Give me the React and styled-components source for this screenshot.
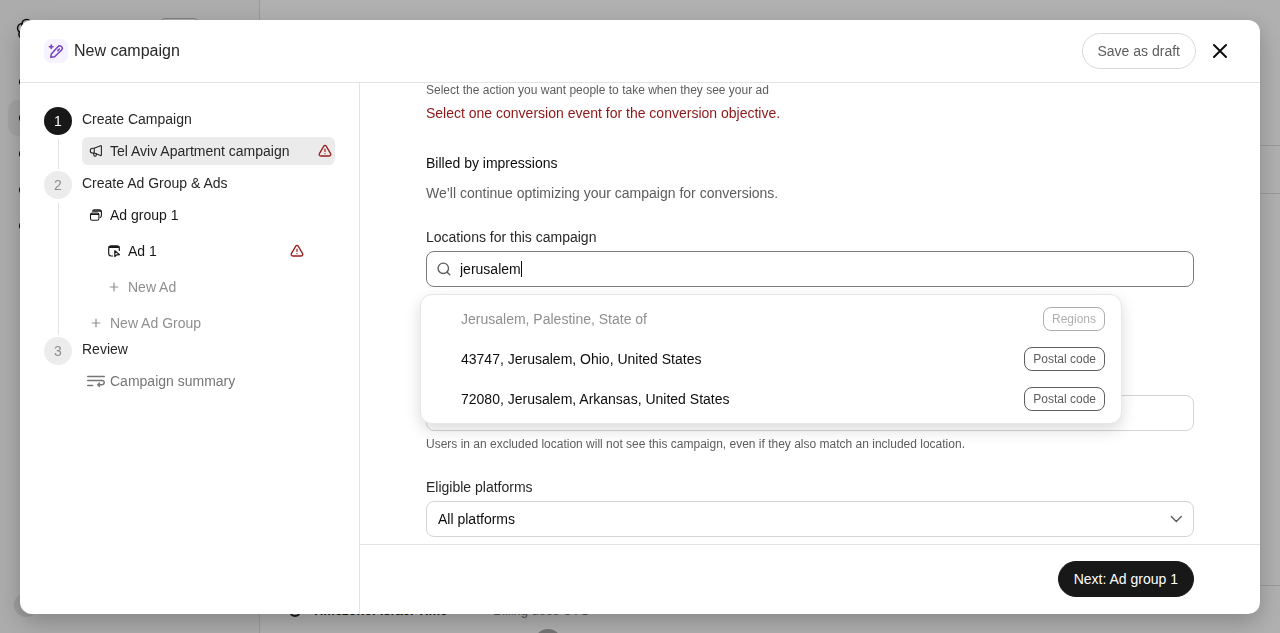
import React, { useState } from 'react';
import styled, { createGlobalStyle } from 'styled-components';

const GlobalStyle = createGlobalStyle`
	* {
		box-sizing: border-box;
	}

	body {
		margin: 0;
		color: #0d0d0d;
		font-family: "Liberation Sans", Arial, sans-serif;
		font-size: 14px;
		line-height: 20px;
	}

	button,
	input,
	select {
		color: inherit;
		font: inherit;
	}
`;

/* page behind the dialog */

const Shell = styled.div`
	display: grid;
	grid-template-columns: 260px 1fr;
	height: 100vh;
	overflow: hidden;
`;

const Nav = styled.nav`
	display: flex;
	flex-direction: column;
	justify-content: space-between;
	padding: 16px 8px;
	background: #fafafa;
	border-right: 1px solid #e0e0e0;
`;

const NavTop = styled.div`
	display: flex;
	justify-content: space-between;
	padding: 2px 53px 0 8px;
	margin-bottom: 22px;
`;

const NavTag = styled.span`
	width: 37px;
	height: 20px;
	border: 1px solid #bbb;
	border-radius: 4px;
`;

const NavItem = styled.a`
	display: flex;
	align-items: center;
	height: 36px;
	padding-left: 10px;
	border-radius: 10px;
	background: ${(props) => (props.$active ? '#ececec' : 'transparent')};
`;

const Avatar = styled.span`
	width: 24px;
	height: 24px;
	margin-left: 6px;
	border-radius: 50%;
	background: #e4e4e4;
`;

const Page = styled.main`
	display: flex;
	flex-direction: column;
	background: #fff;
`;

const PageBand = styled.div`
	flex: ${(props) => props.$size};
	border-bottom: 1px solid #e0e0e0;
`;

const PageFooter = styled.div`
	flex: 0 0 47px;
	height: 47px;
	padding: 15px 28px 0;
	overflow: hidden;
`;

const FooterNotes = styled.div`
	display: flex;
	gap: 46px;
`;

const FooterNote = styled.span`
	display: flex;
	align-items: center;
	gap: 10px;
	color: ${(props) => (props.$strong ? '#222' : '#777')};
	font-size: 13px;
	font-weight: ${(props) => (props.$strong ? 600 : 400)};
`;

const Bubble = styled.div`
	width: 28px;
	height: 28px;
	margin: 8px 0 0 246px;
	border-radius: 50%;
	background: #aaa;
`;

/* dialog */

const Overlay = styled.div`
	position: fixed;
	inset: 0;
	display: flex;
	padding: 20px 20px 19px;
	background: rgba(0, 0, 0, 0.31);
`;

const Dialog = styled.section`
	display: flex;
	flex: 1;
	flex-direction: column;
	overflow: hidden;
	border-radius: 12px;
	background: #fff;
	box-shadow: 0 8px 24px rgba(0, 0, 0, 0.24);
`;

const Header = styled.header`
	display: flex;
	align-items: center;
	height: 63px;
	padding: 0 24px;
	border-bottom: 1px solid #e3e3e3;
`;

const HeaderIcon = styled.span`
	display: grid;
	place-items: center;
	width: 24px;
	height: 24px;
	border-radius: 8px;
	background: #f7f2ff;
	color: #7540c0;
`;

const Title = styled.h1`
	flex: 1;
	margin: 0 0 0 6px;
	color: #282828;
	font-size: 16px;
	font-weight: 400;
	line-height: 24px;
`;

const Button = styled.button`
	height: 36px;
	padding: 0 15px;
	border: 1px solid ${(props) => (props.$primary ? '#181818' : '#d9d9d9')};
	border-radius: 18px;
	background: ${(props) => (props.$primary ? '#181818' : '#fff')};
	color: ${(props) => (props.$primary ? '#fff' : '#5d5d5d')};
`;

const CloseButton = styled.button`
	display: grid;
	place-items: center;
	width: 32px;
	height: 32px;
	margin-left: 8px;
	padding: 0;
	border: 0;
	background: none;
`;

const Columns = styled.div`
	display: grid;
	flex: 1;
	grid-template-columns: 340px 1fr;
	min-height: 0;
`;

const Steps = styled.ol`
	margin: 0;
	padding: 24px;
	border-right: 1px solid #e3e3e3;
	list-style: none;
`;

const StepRow = styled.li`
	display: grid;
	grid-template-columns: 28px 1fr;
	gap: 10px;
	padding-bottom: ${(props) => (props.$spaced ? '6px' : '0')};
`;

const Rail = styled.div`
	display: flex;
	flex-direction: column;
	align-items: center;
	margin-bottom: ${(props) => (props.$spaced ? '-6px' : '0')};
`;

const StepNumber = styled.span`
	display: grid;
	place-items: center;
	width: 28px;
	height: 28px;
	border-radius: 50%;
	background: ${(props) => (props.$current ? '#181818' : '#ececec')};
	color: ${(props) => (props.$current ? '#fff' : '#8f8f8f')};
`;

const RailLine = styled.span`
	flex: 1;
	width: 1px;
	margin: 4px 0 2px;
	background: #e3e3e3;
`;

const StepBody = styled.div`
	display: flex;
	flex-direction: column;
	gap: 8px;
`;

const StepTitle = styled.h2`
	margin: 0 0 -2px;
	color: #282828;
	font-size: 14px;
	font-weight: 400;
	line-height: 24px;
`;

const StepItem = styled.button`
	display: flex;
	align-items: center;
	gap: 5px;
	height: 28px;
	margin-left: ${(props) => (props.$nested ? '18px' : '0')};
	margin-right: ${(props) => (props.$nested ? '28px' : '0')};
	padding: 0 3px 0 5px;
	border: 0;
	border-radius: 6px;
	background: ${(props) => (props.$selected ? '#ebebeb' : 'none')};
	color: ${(props) => props.$tone || '#282828'};
	text-align: left;
`;

const IconSlot = styled.span`
	display: grid;
	place-items: center;
	width: 18px;
`;

const ItemName = styled.span`
	flex: 1;
	white-space: nowrap;
`;

const Main = styled.div`
	display: flex;
	flex-direction: column;
	min-width: 0;
	min-height: 0;
`;

const Scroller = styled.div`
	flex: 1;
	min-height: 0;
	overflow: hidden;
	padding: 0 66px;
`;

const Form = styled.form`
	display: flex;
	flex-direction: column;
	max-width: 768px;
	margin: 0 auto;
`;

const Hint = styled.p`
	margin: ${(props) => (props.$below ? '6px 0 0' : '0')};
	color: #5d5d5d;
	font-size: 12px;
	line-height: 14px;
`;

const ErrorText = styled.p`
	margin: 6px 0 0;
	color: #8e1616;
`;

const Section = styled.section`
	display: flex;
	flex-direction: column;
	margin-top: ${(props) => props.$gap};
`;

const Heading = styled.h3`
	margin: 0;
	font-size: 14px;
	font-weight: 500;
`;

const Copy = styled.p`
	margin: 10px 0 0;
	color: #5d5d5d;
`;

const Label = styled.label`
	margin-bottom: 4px;
	color: #282828;
`;

const Field = styled.div`
	position: relative;
	display: flex;
	align-items: center;
	height: 36px;
	padding: 0 10px;
	border: 1px solid ${(props) => (props.$focused ? '#7c7c7c' : '#d4d4d4')};
	border-radius: 8px;
`;

const TextInput = styled.input`
	width: 100%;
	padding: 0;
	border: 0;
	outline: 0;
	background: none;
`;

const SearchInput = styled(TextInput)`
	width: auto;
	min-width: 1px;
	margin-left: 9px;
	field-sizing: content;
	caret-color: transparent;
`;

const Caret = styled.span`
	width: 1px;
	height: 16px;
	background: #0d0d0d;
`;

const Options = styled.ul`
	position: absolute;
	z-index: 1;
	top: calc(100% + 8px);
	right: 71px;
	left: -7px;
	margin: 0;
	padding: 4px 0;
	border: 1px solid #e6e6e6;
	border-radius: 12px;
	background: #fff;
	box-shadow: 0 6px 16px rgba(0, 0, 0, 0.14);
	list-style: none;
`;

const Option = styled.button`
	display: flex;
	align-items: center;
	justify-content: space-between;
	width: 100%;
	height: 40px;
	padding: 0 16px 0 40px;
	border: 0;
	background: none;
	color: #0d0d0d;
	text-align: left;

	&:disabled {
		color: #8f8f8f;
	}
`;

const Badge = styled.span`
	height: 24px;
	padding: 0 8px;
	border: 1px solid #5d5d5d;
	border-radius: 8px;
	color: #5d5d5d;
	font-size: 12px;
	line-height: 22px;

	${Option}:disabled & {
		opacity: 0.5;
	}
`;

const Select = styled.select`
	flex: 1;
	padding: 0 0 0 1px;
	border: 0;
	outline: 0;
	appearance: none;
	background: none;
`;

const Footer = styled.footer`
	display: flex;
	align-items: flex-start;
	justify-content: flex-end;
	height: 70px;
	padding: 16px 66px 0;
	border-top: 1px solid #e3e3e3;
`;

const Icon = ({ size = 14, width = 1.3, children, ...rest }) => (
	<svg
		width={size}
		height={size}
		viewBox={`0 0 ${size} ${size}`}
		fill="none"
		stroke="currentColor"
		strokeWidth={width}
		strokeLinecap="round"
		strokeLinejoin="round"
		aria-hidden="true"
		{...rest}
	>
		{children}
	</svg>
);

const PencilSparkle = () => (
	<Icon size={16} width={1.5}>
		<path d="M2.8 14.3 3.3 10.9 9.9 3.8a2.4 2.4 0 0 1 3.7 3.2L6.6 13.7Z" />
		<path d="m9.8 7.6 1.6-1.6" />
		<path d="M3.2 1.9v3.6M1.4 3.7H5" />
	</Icon>
);

const Megaphone = () => (
	<Icon width={1.1}>
		<path d="M5.2 4.3 11.6 1.7c.4-.1.8.1.8.5v8.9c0 .4-.4.6-.8.5L5.2 9H3.6a2.3 2.3 0 0 1 0-4.7Z" />
		<path d="M5.2 4.3V9M4.4 9.2l.5 2.1c.3 1.2 2.3 1.1 2.4-.2l.1-1.2" />
	</Icon>
);

const Stack = () => (
	<Icon width={1.1}>
		<rect x="1.5" y="5" width="8.4" height="7.2" rx="1.8" />
		<path d="M2 6.2h7.4" strokeWidth="1.4" />
		<path d="M3.5 3.1c.3-.8.9-1.3 1.8-1.3h5c1.3 0 2.1.8 2.1 2.1v3.6c0 1-.4 1.7-1.1 2" />
		<path d="M4.2 3h7.6" strokeWidth="1.4" />
	</Icon>
);

const AdWindow = () => (
	<Icon width={1.2}>
		<path d="M5.6 12H4.1a2.4 2.4 0 0 1-2.4-2.4V4.2a2.4 2.4 0 0 1 2.4-2.4h5.8a2.4 2.4 0 0 1 2.4 2.4v2.2" />
		<path d="M2.5 3.1h9" strokeWidth="2" />
		<path d="m7.8 6.7 4.7 3.9-2.8.2-1.9 1.8Z" />
	</Icon>
);

const Plus = () => (
	<Icon width={1.2}>
		<path d="M7 3.2v7.6M3.2 7h7.6" />
	</Icon>
);

const Summary = () => (
	<Icon size={18} width={1.4}>
		<path d="M.7 4.5h16.6M.7 8.5h14.2M.7 13.5h5" />
		<path d="M14.9 8.5c3.1 0 3.1 4.2 0 4.2h-4.2m1.8-1.8-1.8 1.8 1.8 1.8" />
	</Icon>
);

const Warning = () => (
	<Icon width={1.3} stroke="#9b1c1c">
		<path d="M5.8 2.1 1.4 9.7c-.6 1 .1 2.3 1.3 2.3h8.6c1.2 0 1.9-1.3 1.3-2.3L8.2 2.1a1.4 1.4 0 0 0-2.4 0Z" />
		<path d="M7 5.2v2.3M7 9.6v.1" strokeWidth="1.2" />
	</Icon>
);

const Search = () => (
	<Icon size={14} width={1.4} stroke="#5d5d5d">
		<circle cx="6.3" cy="6.3" r="5.2" />
		<path d="m10.2 10.2 2.6 2.6" />
	</Icon>
);

const Chevron = () => (
	<Icon size={14} width={1.4} stroke="#5d5d5d">
		<path d="m2.3 4.5 5 5 5-5" />
	</Icon>
);

const Close = () => (
	<Icon size={16} width={2}>
		<path d="m2 2 12 12M14 2 2 14" />
	</Icon>
);

const Knot = () => (
	<Icon size={24} width={1.4}>
		{[0, 60, 120, 180, 240, 300].map((angle) => (
			<path
				key={angle}
				d="M6 11V6.2a4.6 4.6 0 0 1 8.6-2.4l-5 3v5.7"
				transform={`rotate(${angle} 12 12)`}
			/>
		))}
	</Icon>
);

const Dot = () => (
	<Icon size={14} width={2}>
		<circle cx="7" cy="7" r="5" />
		<path d="M2 7h10" />
	</Icon>
);

const steps = [
	{
		title: 'Create Campaign',
		spaced: true,
		items: [
			{
				name: 'Tel Aviv Apartment campaign',
				icon: Megaphone,
				selected: true,
				warning: true,
			},
		],
	},
	{
		title: 'Create Ad Group & Ads',
		items: [
			{ name: 'Ad group 1', icon: Stack, tone: '#181818' },
			{
				name: 'Ad 1',
				icon: AdWindow,
				nested: true,
				warning: true,
				tone: '#181818',
			},
			{ name: 'New Ad', icon: Plus, nested: true, tone: '#8f8f8f' },
			{ name: 'New Ad Group', icon: Plus, tone: '#8f8f8f' },
		],
	},
	{
		title: 'Review',
		items: [{ name: 'Campaign summary', icon: Summary, tone: '#767676' }],
	},
];

const places = [
	{ name: 'Jerusalem, Palestine, State of', kind: 'Regions', disabled: true },
	{ name: '43747, Jerusalem, Ohio, United States', kind: 'Postal code' },
	{ name: '72080, Jerusalem, Arkansas, United States', kind: 'Postal code' },
];

const Backdrop = () => (
	<Shell aria-hidden="true">
		<Nav>
			<div>
				<NavTop>
					<Knot />
					<NavTag />
				</NavTop>
				{[0, 1, 2, 3, 4].map((i) => (
					<NavItem key={i} $active={i === 1}>
						<Dot />
					</NavItem>
				))}
			</div>
			<Avatar />
		</Nav>
		<Page>
			<PageBand $size="0 0 146px" />
			<PageBand $size="0 0 48px" />
			<PageBand $size="1" />
			<PageFooter>
				<FooterNotes>
					<FooterNote $strong>
						<Dot />
						Timezone: Israel Time
					</FooterNote>
					<FooterNote>Billing uses UTC</FooterNote>
				</FooterNotes>
				<Bubble />
			</PageFooter>
		</Page>
	</Shell>
);

const StepList = () => (
	<Steps>
		{steps.map((step, i) => (
			<StepRow key={step.title} $spaced={step.spaced}>
				<Rail $spaced={step.spaced}>
					<StepNumber $current={i === 0}>{i + 1}</StepNumber>
					{i < steps.length - 1 && <RailLine />}
				</Rail>
				<StepBody>
					<StepTitle>{step.title}</StepTitle>
					{step.items.map((item) => (
						<StepItem
							key={item.name}
							type="button"
							$nested={item.nested}
							$selected={item.selected}
							$tone={item.tone}
						>
							<IconSlot>
								<item.icon />
							</IconSlot>
							<ItemName>{item.name}</ItemName>
							{item.warning && <Warning />}
						</StepItem>
					))}
				</StepBody>
			</StepRow>
		))}
	</Steps>
);

const LocationSearch = () => {
	const [query, setQuery] = useState('jerusalem');

	return (
		<Section $gap="24px">
			<Label htmlFor="locations">Locations for this campaign</Label>
			<Field $focused>
				<Search />
				<SearchInput
					id="locations"
					type="text"
					autoComplete="off"
					value={query}
					onChange={(e) => setQuery(e.target.value)}
				/>
				<Caret />
				<Options>
					{places.map((place) => (
						<li key={place.name}>
							<Option
								type="button"
								disabled={place.disabled}
								onClick={() => setQuery(place.name)}
							>
								{place.name}
								<Badge>{place.kind}</Badge>
							</Option>
						</li>
					))}
				</Options>
			</Field>
		</Section>
	);
};

const App = () => (
	<>
		<GlobalStyle />
		<Backdrop />
		<Overlay>
			<Dialog role="dialog" aria-labelledby="dialog-title">
				<Header>
					<HeaderIcon>
						<PencilSparkle />
					</HeaderIcon>
					<Title id="dialog-title">New campaign</Title>
					<Button type="button">Save as draft</Button>
					<CloseButton type="button" aria-label="Close">
						<Close />
					</CloseButton>
				</Header>
				<Columns>
					<StepList />
					<Main>
						<Scroller>
							<Form>
								<Hint>
									Select the action you want people to take when they see your
									ad
								</Hint>
								<ErrorText>
									Select one conversion event for the conversion objective.
								</ErrorText>
								<Section $gap="30px">
									<Heading>Billed by impressions</Heading>
									<Copy>
										We’ll continue optimizing your campaign for conversions.
									</Copy>
								</Section>
								<LocationSearch />
								<Section $gap="108px">
									<Field>
										<TextInput type="text" aria-label="Excluded locations" />
									</Field>
									<Hint $below>
										Users in an excluded location will not see this campaign,
										even if they also match an included location.
									</Hint>
								</Section>
								<Section $gap="26px">
									<Label htmlFor="platforms">Eligible platforms</Label>
									<Field>
										<Select id="platforms">
											<option>All platforms</option>
										</Select>
										<Chevron />
									</Field>
								</Section>
							</Form>
						</Scroller>
						<Footer>
							<Button type="button" $primary>
								Next: Ad group 1
							</Button>
						</Footer>
					</Main>
				</Columns>
			</Dialog>
		</Overlay>
	</>
);

export default App;
